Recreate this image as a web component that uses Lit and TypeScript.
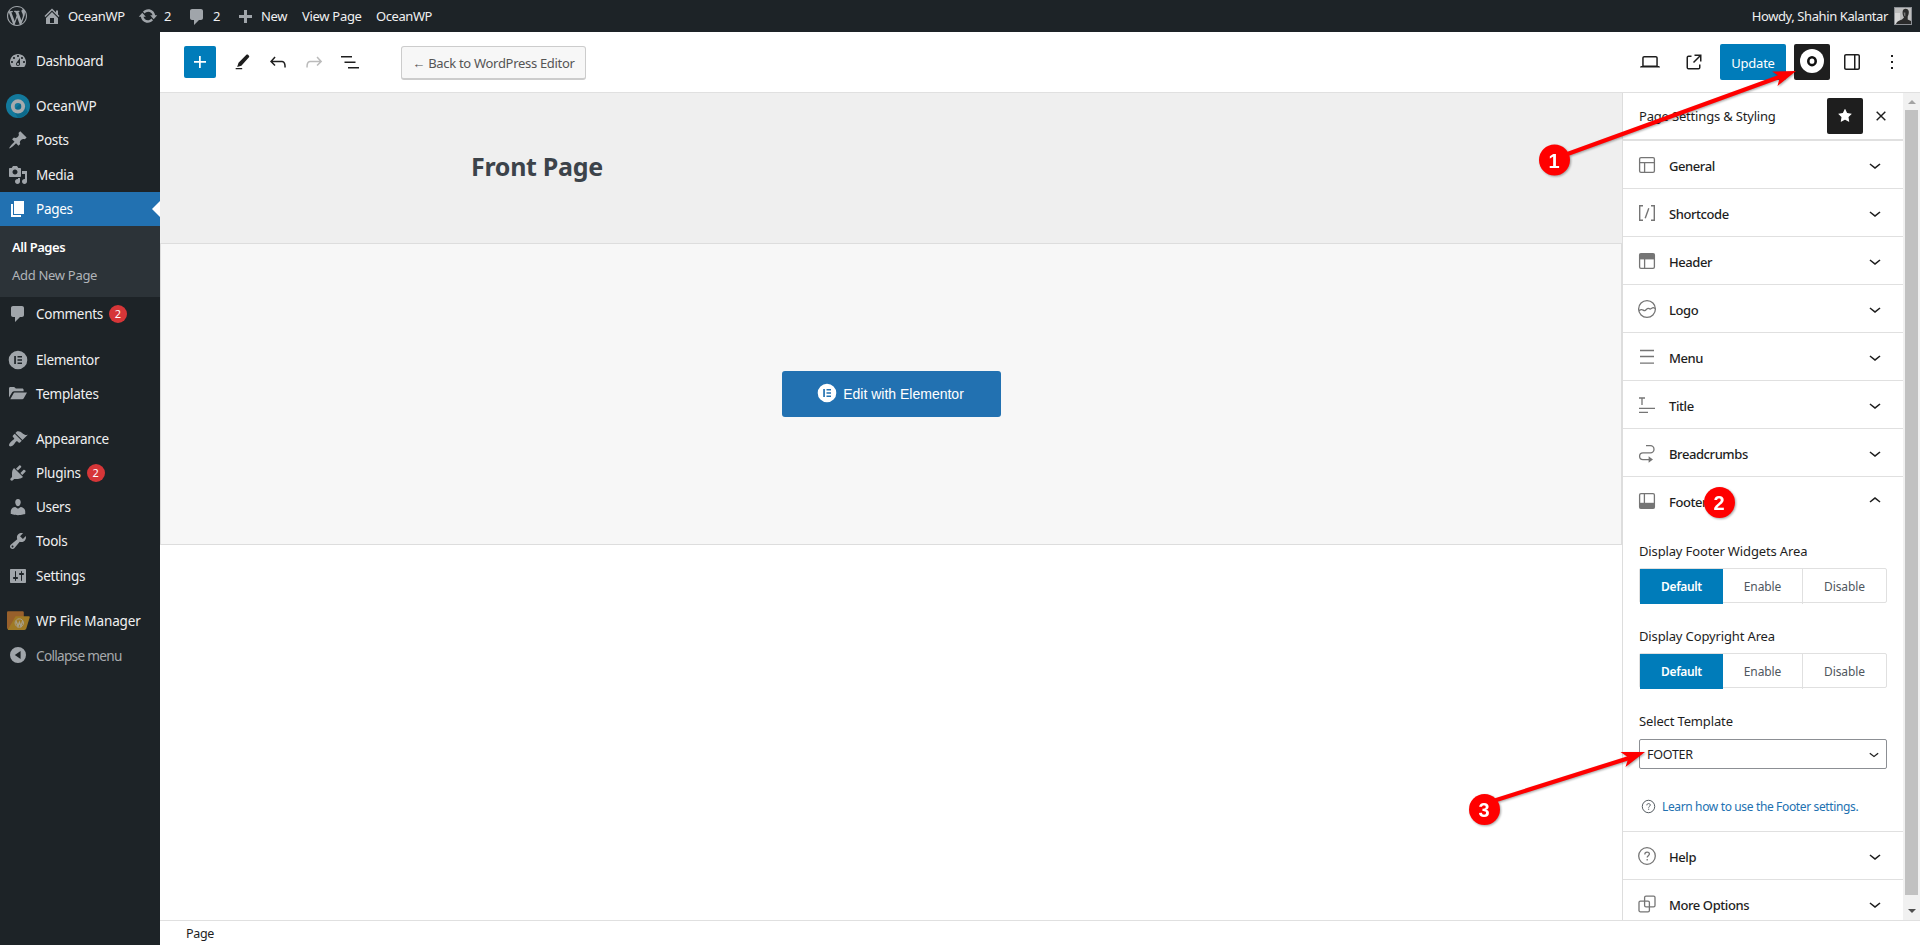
import { LitElement, html, svg, css, nothing } from "lit";
import { customElement, property } from "lit/decorators.js";
import { classMap } from "lit/directives/class-map.js";

const P: Record<string, { box: number; body: unknown }> = {};
const solid = (name: string, box: number, d: string) => {
  P[name] = { box, body: svg`<path fill="currentColor" d=${d}></path>` };
};

solid("wordpress", 20, "M20 10c0-5.51-4.49-10-10-10C4.48 0 0 4.49 0 10c0 5.52 4.48 10 10 10 5.51 0 10-4.48 10-10zM7.78 15.37L4.37 6.22c.55-.02 1.17-.08 1.17-.08.5-.06.44-1.13-.06-1.11 0 0-1.45.11-2.37.11-.18 0-.37 0-.58-.01C4.12 2.69 6.87 1.11 10 1.11c2.33 0 4.45.87 6.05 2.34-.68-.11-1.65.39-1.65 1.58 0 .74.45 1.36.9 2.1.35.61.55 1.36.55 2.46 0 1.49-1.4 5-1.4 5l-3.03-8.37c.54-.02.82-.17.82-.17.5-.05.44-1.25-.06-1.22 0 0-1.44.12-2.38.12-.87 0-2.33-.12-2.33-.12-.5-.03-.56 1.2-.06 1.22l.92.08 1.26 3.41zM17.41 10c.24-.64.74-1.87.43-4.25.7 1.29 1.05 2.71 1.05 4.25 0 3.29-1.73 6.24-4.4 7.78.97-2.59 1.94-5.2 2.92-7.78zM6.1 18.09C3.12 16.65 1.11 13.53 1.11 10c0-1.3.23-2.48.72-3.59C3.25 10.3 4.67 14.2 6.1 18.09zm4.03-6.63l2.58 6.98c-.86.29-1.76.45-2.71.45-.79 0-1.57-.11-2.29-.33.81-2.38 1.62-4.74 2.42-7.1z");
solid("home", 20, "M16 8.5l1.53 1.53-1.06 1.06L10 4.6l-6.47 6.49-1.06-1.06L10 2.5l4 4v-2h2v4zm-6-2.46l6 5.99V18H4v-5.97zM12 17v-5H8v5h4z");
solid("update", 20, "M10.2 3.28c3.53 0 6.43 2.61 6.92 6h2.08l-3.5 4-3.5-4h2.32c-.45-1.97-2.21-3.45-4.32-3.45-1.45 0-2.73.71-3.54 1.78L4.95 5.66C6.23 4.2 8.11 3.28 10.2 3.28zm-.4 13.44c-3.52 0-6.43-2.61-6.92-6H.8l3.5-4c1.17 1.33 2.33 2.67 3.5 4H5.48c.45 1.97 2.21 3.45 4.32 3.45 1.45 0 2.73-.71 3.54-1.78l1.71 1.95c-1.28 1.46-3.15 2.38-5.25 2.38z");
solid("comments", 20, "M5 2h9c1.1 0 2 .9 2 2v7c0 1.1-.9 2-2 2h-2l-5 5v-5H5c-1.1 0-2-.9-2-2V4c0-1.1.9-2 2-2z");
solid("new", 20, "M17 7v3h-5v5H9v-5H4V7h5V2h3v5h5z");
solid("dashboard", 20, "M3.76 16h12.48c1.1-1.37 1.76-3.11 1.76-5 0-4.42-3.58-8-8-8s-8 3.58-8 8c0 1.89.66 3.63 1.76 5zM10 4c.55 0 1 .45 1 1s-.45 1-1 1-1-.45-1-1 .45-1 1-1zM6 6c.55 0 1 .45 1 1s-.45 1-1 1-1-.45-1-1 .45-1 1-1zm8 0c.55 0 1 .45 1 1s-.45 1-1 1-1-.45-1-1 .45-1 1-1zm-5.37 5.55L12 7v6c0 1.1-.9 2-2 2s-2-.9-2-2c0-.57.24-1.08.63-1.45zM4 10c.55 0 1 .45 1 1s-.45 1-1 1-1-.45-1-1 .45-1 1-1zm12 0c.55 0 1 .45 1 1s-.45 1-1 1-1-.45-1-1 .45-1 1-1zm-5 3c0-.55-.45-1-1-1s-1 .45-1 1 .45 1 1 1 1-.45 1-1z");
solid("post", 20, "M10.44 3.02l1.82-1.82 6.36 6.35-1.83 1.82c-1.05-.68-2.48-.57-3.41.36l-.75.75c-.92.93-1.04 2.35-.35 3.41l-1.83 1.82-2.41-2.41-2.8 2.79c-.42.42-3.38 2.71-3.8 2.29s1.86-3.39 2.28-3.81l2.79-2.79L4.1 9.36l1.83-1.82c1.05.69 2.48.57 3.4-.36l.75-.75c.93-.92 1.05-2.35.36-3.41z");
solid("media", 20, "M13 11V4c0-.55-.45-1-1-1h-1.67L9 1H5L3.67 3H2c-.55 0-1 .45-1 1v7c0 .55.45 1 1 1h10c.55 0 1-.45 1-1zM7 4.5c1.38 0 2.5 1.12 2.5 2.5S8.38 9.5 7 9.5 4.5 8.38 4.5 7 5.62 4.5 7 4.5zM14 6h5v10.5c0 1.38-1.12 2.5-2.5 2.5S14 17.88 14 16.5s1.12-2.5 2.5-2.5c.17 0 .34.02.5.05V9h-3V6zm-4 8.05V13h2v3.5c0 1.38-1.12 2.5-2.5 2.5S7 17.88 7 16.5 8.12 14 9.5 14c.17 0 .34.02.5.05z");
solid("page", 20, "M6 15V2h10v13H6zm-1 1h8v2H3V5h2v11z");
solid("appearance", 20, "M14.48 11.06L7.41 3.99l1.5-1.5c.5-.56 2.3-.47 3.51.32 1.21.8 1.43 1.28 2.91 2.1 1.18.64 2.45 1.26 4.45.85zm-.71.71L6.7 4.7 4.93 6.47c-.39.39-.39 1.02 0 1.41l1.06 1.06c.39.39.39 1.03 0 1.42-.6.6-1.43 1.11-2.21 1.69-.35.26-.7.53-1.01.84C1.43 14.23.4 16.08 1.4 17.07c.99 1 2.84-.03 4.18-1.36.31-.31.58-.66.85-1.02.57-.78 1.08-1.61 1.69-2.21.39-.39 1.02-.39 1.41 0l1.06 1.06c.39.39 1.02.39 1.41 0z");
solid("plugins", 20, "M13.11 4.36L9.87 7.6 8 5.73l3.24-3.24c.35-.34 1.05-.2 1.56.32.52.51.66 1.21.31 1.55zm-8 1.77l.91-1.12 9.01 9.01-1.19.84c-.71.71-2.63 1.16-3.82 1.16H6.14L4.9 17.26c-.59.59-1.54.59-2.12 0-.59-.58-.59-1.53 0-2.12l1.24-1.24v-3.88c0-1.13.4-3.19 1.09-3.89zm7.26 3.97l3.24-3.24c.34-.35 1.04-.21 1.55.31.52.51.66 1.21.31 1.55l-3.24 3.25z");
solid("users", 20, "M10 9.25c-2.27 0-2.73-3.44-2.73-3.44C7 4.02 7.82 2 9.97 2c2.16 0 2.98 2.02 2.71 3.81 0 0-.41 3.44-2.68 3.44zm0 2.57L12.72 10c2.39 0 4.52 2.33 4.52 4.53v2.49s-3.65 1.13-7.24 1.13c-3.65 0-7.24-1.13-7.24-1.13v-2.49c0-2.25 1.94-4.48 4.47-4.48z");
solid("tools", 20, "M16.68 9.77c-1.34 1.34-3.3 1.67-4.95.99l-5.41 6.52c-.99.99-2.59.99-3.58 0s-.99-2.59 0-3.57l6.52-5.42c-.68-1.65-.35-3.61.99-4.95 1.28-1.28 3.12-1.62 4.72-1.06l-2.89 2.89 2.82 2.82 2.86-2.87c.53 1.58.18 3.39-1.08 4.65zM3.81 16.21c.4.39 1.04.39 1.43 0 .4-.4.4-1.04 0-1.43-.39-.4-1.03-.4-1.43 0-.39.39-.39 1.03 0 1.43z");
solid("settings", 20, "M18 16V4c0-.55-.45-1-1-1H3c-.55 0-1 .45-1 1v12c0 .55.45 1 1 1h14c.55 0 1-.45 1-1zM8 11h1c.55 0 1 .45 1 1s-.45 1-1 1H8v1.5c0 .28-.22.5-.5.5s-.5-.22-.5-.5V13H6c-.55 0-1-.45-1-1s.45-1 1-1h1V5.5c0-.28.22-.5.5-.5s.5.22.5.5V11zm5-2h-1c-.55 0-1-.45-1-1s.45-1 1-1h1V5.5c0-.28.22-.5.5-.5s.5.22.5.5V7h1c.55 0 1 .45 1 1s-.45 1-1 1h-1v5.5c0 .28-.22.5-.5.5s-.5-.22-.5-.5V9z");
solid("collapse", 20, "M10 2a8 8 0 1 0 0 16 8 8 0 0 0 0-16zM12.6 6v8L6.8 10z");
solid("folder", 20, "M1 15.2V4.4C1 3.6 1.6 3 2.4 3h3.4c.6 0 .9.2 1.3.7l.7.9h6.4c.8 0 1.4.6 1.4 1.4v1.2H6.2c-.9 0-1.5.4-2 1.1L1 13.6zM6.6 8.6H19l-3.4 5.9c-.3.5-.8.8-1.4.8H2.3l3.3-6c.2-.5.5-.7 1-.7z");
P.elementor = { box: 20, body: svg`<path fill="currentColor" fill-rule="evenodd" d="M10 .7a9.3 9.3 0 1 0 0 18.6A9.3 9.3 0 0 0 10 .7zM6.2 6h1.7v8H6.2zM9.5 6h4.5v1.6H9.5zM9.5 9.2h4.5v1.6H9.5zM9.5 12.4h4.5V14H9.5z"></path>` };
P.ocean = { box: 24, body: svg`<circle cx="12" cy="12" r="12" fill="#13799c"></circle><path fill="#0c698a" d="M16.5 7.2 21.6 18A12 12 0 0 1 12 24L7.5 16.5z"></path><circle cx="12" cy="12.4" r="5.2" fill="none" stroke="#a7aaad" stroke-width="3.8"></circle>` };
P.files = { box: 24, body: svg`<path fill="#98602b" d="M1 3.2Q1 2.2 2 2.2h14.6q1.2 0 1.2 1.2V9L6 20H2q-1 0-1-1z"></path><path fill="#9f7a25" d="M9.6 7.3h13.2q1.3 0 .9 1.3l-3.4 11q-.4 1.4-1.8 1.4H1.6z"></path><g fill="none" stroke="#a7a08a" stroke-width="1"><circle cx="13.3" cy="14" r="4.2"></circle><path d="m10.2 12.2 1.8 5 1.4-4 1.5 4 1.7-5.2" stroke-width="1.3"></path></g>` };

solid("plus", 24, "M11 12.75v5.25h1.75v-5.25H18V11h-5.25V6H11v5H6v1.75z");
solid("edit", 24, "M19.6 6.9c.5-.6.5-1.3 0-1.8l-1-.9c-.5-.5-1.3-.5-1.8 0l-8.6 8.6-1.5 4.6 4.6-1.4zM12.2 18.5H5.1V20h7.1z");
solid("undo", 24, "M18.3 11.7c-.6-.6-1.4-.9-2.3-.9H6.7l2.9-3.3-1.1-1-4.5 5L8.5 16l1-1-2.7-2.7H16c.5 0 .9.2 1.3.5 1 1 1 3.4 1 4.5v.3h1.5v-.2c0-1.5 0-4.3-1.5-5.7z");
solid("redo", 24, "M15.6 6.5l-1.1 1 2.9 3.3H8c-.9 0-1.7.3-2.3.9-1.4 1.5-1.4 4.2-1.4 5.6v.2h1.5v-.3c0-1.1 0-3.5 1-4.5.3-.3.7-.5 1.3-.5h9.2L14.5 15l1.1 1.1 4.6-4.6-4.6-5z");
solid("list", 24, "M3 6h11v1.5H3V6Zm3.5 5.5h11V13h-11v-1.5ZM21 17H10v1.5h11V17Z");
solid("laptop", 24, "M20.5 16h-.7V8c0-1.1-.9-2-2-2H6.2c-1.1 0-2 .9-2 2v8h-.7c-.8 0-1.5.7-1.5 1.5h20c0-.8-.7-1.5-1.5-1.5zM5.7 8c0-.3.2-.5.5-.5h11.6c.3 0 .5.2.5.5v7.6H5.7V8z");
solid("external", 24, "M19.5 4.5h-7V6h4.44l-5.97 5.97 1.06 1.06L18 7.06v4.44h1.5v-7Zm-13 1a2 2 0 0 0-2 2v10a2 2 0 0 0 2 2h10a2 2 0 0 0 2-2v-3H17v3a.5.5 0 0 1-.5.5h-10a.5.5 0 0 1-.5-.5v-10a.5.5 0 0 1 .5-.5h3V5.5h-3Z");
solid("drawer", 24, "M18 4H6c-1.1 0-2 .9-2 2v12c0 1.1.9 2 2 2h12c1.1 0 2-.9 2-2V6c0-1.1-.9-2-2-2zm-4 14.5H6c-.3 0-.5-.2-.5-.5V6c0-.3.2-.5.5-.5h8v13zm4.5-.5c0 .3-.2.5-.5.5h-2.5v-13H18c.3 0 .5.2.5.5v12z");
solid("more", 24, "M13 19h-2v-2h2v2zm0-6h-2v-2h2v2zm0-6h-2V5h2v2z");
solid("down", 24, "M17.5 11.6L12 16l-5.5-4.4.9-1.2L12 14l4.5-3.6 1 1.2z");
solid("up", 24, "M6.5 12.4L12 8l5.5 4.4-.9 1.2L12 10l-4.5 3.6-1-1.2z");
solid("star", 24, "M11.776 4.454a.25.25 0 01.448 0l2.069 4.192a.25.25 0 00.188.137l4.626.672a.25.25 0 01.139.426l-3.348 3.263a.25.25 0 00-.072.222l.79 4.607a.25.25 0 01-.362.263l-4.138-2.175a.25.25 0 00-.232 0l-4.138 2.175a.25.25 0 01-.363-.263l.79-4.607a.25.25 0 00-.071-.222L4.754 9.881a.25.25 0 01.139-.426l4.626-.672a.25.25 0 00.188-.137l2.069-4.192z");
const line = (name: string, body: unknown) => {
  P[name] = { box: 20, body: svg`<g fill="none" stroke="currentColor" stroke-width="1.3">${body}</g>` };
};
line("close", svg`<path d="m5.2 5.2 9.6 9.6M14.8 5.2l-9.6 9.6" stroke-width="1.6"></path>`);
line("s-general", svg`<rect x="2.6" y="2.6" width="14.8" height="14.8" rx="1.4"></rect><path d="M2.6 7.6h14.8M7.6 7.6v9.8"></path>`);
line("s-shortcode", svg`<path d="M6 2.7H2.7v14.6H6M14 2.7h3.3v14.6H14M11.8 5.2 8.2 15.2" stroke-width="1.4"></path>`);
line("s-header", svg`<rect x="2.6" y="2.6" width="14.8" height="14.8" rx="1.4"></rect><path d="M2.6 2.8h14.8v5.6H2.6z" fill="currentColor" stroke="none"></path><path d="M7.6 8v9.4"></path>`);
line("s-logo", svg`<circle cx="10" cy="10" r="8.4"></circle><path d="M2 11.6c1.2-.8 2-1.200 2.900-1 1.200.2 1.700 1.200 2.800 1 1.200-.3 2.200-2.300 3.400-2.300 1 0 1.300.8 2.200.7 1.200-.1 1.800-1.300 2.800-1.300.7 0 1.200.3 1.900.8"></path>`);
line("s-menu", svg`<path d="M3 3.500h14M3 9.500h14M3 16.200h14"></path>`);
line("s-title", svg`<path d="M2 3h6M5 3v7M2 13.300h16M2 17.300h9"></path>`);
line("s-breadcrumbs", svg`<path d="M9 2.600h4.400a3.500 3.500 0 0 1 0 7.200H6a3.400 3.400 0 0 0 0 6.800h6.500"></path><path d="m11.600 13.300 4.400 3.300-4.400 3.200z" fill="currentColor" stroke="none"></path>`);
line("s-footer", svg`<rect x="2.6" y="2.6" width="14.8" height="14.8" rx="1.400"></rect><path d="M2.600 11.800h14.800v5.500H2.600z" fill="currentColor" stroke="none"></path><path d="M7.400 2.600V12"></path>`);
line("s-help", svg`<circle cx="10" cy="10" r="8.300"></circle><path d="M7.800 8.400c0-1.400 1-2.300 2.300-2.300s2.300.8 2.300 2c0 1.600-2.200 1.700-2.200 3.400M10.200 12.900v1.500"></path>`);
line("s-options", svg`<rect x="2" y="7.200" width="10.400" height="10.600" rx="1.400"></rect><rect x="7.600" y="2.200" width="10.400" height="10.600" rx="1.400"></rect>`);

@customElement("ui-icon")
class UiIcon extends LitElement {
  @property() name = "";
  @property({ type: Number }) size = 20;
  static styles = css`
    :host { display: block; flex: none; line-height: 0; }
    svg { display: block; overflow: visible; }
  `;
  render() {
    const p = P[this.name];
    return html`<svg width=${this.size} height=${this.size} viewBox="0 0 ${p.box} ${p.box}">${p.body}</svg>`;
  }
}

interface MenuEntry { icon: string; label: string; badge?: number; kind?: string; sub?: string[]; }
const MENU: MenuEntry[][] = [
  [{ icon: "dashboard", label: "Dashboard" }],
  [
    { icon: "ocean", label: "OceanWP", kind: "big" },
    { icon: "post", label: "Posts" },
    { icon: "media", label: "Media", kind: "tall" },
    { icon: "page", label: "Pages", kind: "current", sub: ["All Pages", "Add New Page"] },
    { icon: "comments", label: "Comments", badge: 2 },
  ],
  [{ icon: "elementor", label: "Elementor" }, { icon: "folder", label: "Templates" }],
  [
    { icon: "appearance", label: "Appearance" },
    { icon: "plugins", label: "Plugins", badge: 2 },
    { icon: "users", label: "Users" },
    { icon: "tools", label: "Tools" },
    { icon: "settings", label: "Settings", kind: "tall" },
  ],
  [{ icon: "files", label: "WP File Manager", kind: "big" }, { icon: "collapse", label: "Collapse menu", kind: "muted" }],
];

@customElement("admin-menu")
class AdminMenu extends LitElement {
  static styles = css`
    :host { display: flex; flex-direction: column; gap: 11px; width: 160px; box-sizing: border-box; padding-top: 12px; background: #1d2327; color: #f0f0f1; font-size: 13.5px; letter-spacing: -0.28px; }
    .item { display: flex; align-items: center; height: 34px; padding-left: 8px; gap: 8px; position: relative; white-space: nowrap; }
    .item ui-icon { color: #a0a5aa; }
    .tall { height: 35px; }
    .big { padding-left: 6px; gap: 6px; letter-spacing: -0.12px; }
    .current { background: #2271b1; color: #fff; }
    .current ui-icon { color: #fff; }
    .current::after { content: ""; position: absolute; right: 0; top: 9px; border: 8px solid transparent; border-right-color: #fff; border-left: 0; }
    .muted { color: #a7aaad; letter-spacing: -0.7px; font-size: 13.6px; }
    .badge { width: 18px; height: 18px; border-radius: 9px; background: #d63638; color: #fff; font-size: 11px; line-height: 18px; text-align: center; margin-left: -2px; letter-spacing: 0; }
    .sub { background: #2c3338; height: 71px; box-sizing: border-box; padding: 7px 12px; font-size: 13px; line-height: 28px; color: #b0b4b8; letter-spacing: -0.3px; }
    .sub + .item { padding-bottom: 1px; }
    .on { font-weight: 600; color: #fff; letter-spacing: -0.45px; }
  `;
  render() {
    return MENU.map((group) => html`<nav>${group.map((m) => html`
      <div class=${classMap({ item: true, [m.kind ?? "plain"]: true })}>
        <ui-icon name=${m.icon} size=${m.kind === "big" ? 24 : 20}></ui-icon>
        <span>${m.label}</span>
        ${m.badge ? html`<span class="badge">${m.badge}</span>` : nothing}
      </div>
      ${m.sub ? html`<div class="sub">${m.sub.map((s, i) => html`<div class=${classMap({ on: i === 0 })}>${s}</div>`)}</div>` : nothing}
    `)}</nav>`);
  }
}

@customElement("settings-panel")
class SettingsPanel extends LitElement {
  static styles = css`
    :host { display: flex; box-sizing: border-box; border-left: 1px solid #ddd; background: #fff; color: #1e1e1e; font-size: 13px; letter-spacing: -0.14px; overflow: hidden; }
    .body { width: 280px; flex: none; }
    .head { display: flex; align-items: center; height: 46px; border-bottom: 2px solid #e0e0e0; padding: 0 4px 0 16px; box-sizing: content-box; letter-spacing: -0.18px; }
    .head span { flex: 1; }
    .star { width: 36px; height: 36px; border-radius: 2px; background: #1e1e1e; color: #fff; display: grid; place-items: center; }
    .close { width: 36px; display: grid; place-items: center; }
    .row { display: flex; align-items: center; height: 47px; padding: 0 16px 0 14px; gap: 12px; border-bottom: 1px solid #e0e0e0; letter-spacing: -0.42px; }
    .row ui-icon:first-child { color: #757575; }
    .row span { flex: 1; font-weight: 500; padding-top: 2px; }
    .open { border-bottom: 0; height: 48px; }
    .fields { height: 307px; border-bottom: 1px solid #e0e0e0; padding: 16px 16px 0; box-sizing: border-box; }
    .label { line-height: 20px; height: 27px; }
    .toggle { display: grid; grid-template-columns: 83px 79px 1fr; height: 35px; box-sizing: border-box; border: 1px solid #e0e0e0; border-radius: 2px; margin-bottom: 23px; font-size: 12px; line-height: 35px; text-align: center; color: #50575e; letter-spacing: -0.1px; }
    .toggle .on { background: #007cba; color: #fff; font-weight: 600; letter-spacing: -0.35px; }
    .toggle .last { border-left: 1px solid #e0e0e0; }
    .select { display: flex; align-items: center; justify-content: space-between; height: 30px; box-sizing: border-box; border: 1px solid #8c8f94; border-radius: 2px; padding: 0 2px 0 7px; font-size: 12.5px; letter-spacing: -0.25px; margin-top: 1px; }
    .learn { display: flex; align-items: center; gap: 6px; padding: 29px 0 0 2px; font-size: 12px; letter-spacing: -0.36px; color: #2271b1; white-space: nowrap; }
    .learn ui-icon { color: #50575e; }
    .bar { flex: 1; background: #f1f1f1; display: flex; flex-direction: column; align-items: center; justify-content: space-between; }
    .arrow { border: 4px solid transparent; border-top: 0; border-bottom: 4px solid #a3a3a3; margin: 7px 0 6px; }
    .dn { border-top: 4px solid #505050; border-bottom: 0; margin: 14px 0 7px; }
    .thumb { width: 13px; flex: 1; background: #c1c1c1; }
  `;
  private row(icon: string, label: string, open = false) {
    return html`<div class=${classMap({ row: true, open })}>
      <ui-icon name=${icon} size="20"></ui-icon><span>${label}</span><ui-icon name=${open ? "up" : "down"} size="24"></ui-icon>
    </div>`;
  }
  private toggle(label: string) {
    return html`<div class="label">${label}</div>
      <div class="toggle"><div class="on">Default</div><div>Enable</div><div class="last">Disable</div></div>`;
  }
  render() {
    return html`
      <div class="body">
        <div class="head"><span>Page Settings &amp; Styling</span><div class="star"><ui-icon name="star" size="22"></ui-icon></div><div class="close"><ui-icon name="close" size="18"></ui-icon></div></div>
        ${["General", "Shortcode", "Header", "Logo", "Menu", "Title", "Breadcrumbs"].map((n) => this.row("s-" + n.toLowerCase(), n))}
        ${this.row("s-footer", "Footer", true)}
        <div class="fields">
          ${this.toggle("Display Footer Widgets Area")}
          ${this.toggle("Display Copyright Area")}
          <div class="label">Select Template</div>
          <div class="select"><span>FOOTER</span><ui-icon name="down" size="20"></ui-icon></div>
          <div class="learn"><ui-icon name="s-help" size="15"></ui-icon>Learn how to use the Footer settings.</div>
        </div>
        ${this.row("s-help", "Help")} ${this.row("s-options", "More Options")}
      </div>
      <div class="bar"><div class="arrow"></div><div class="thumb"></div><div class="arrow dn"></div></div>
    `;
  }
}

@customElement("app-root")
class AppRoot extends LitElement {
  static styles = css`
    :host { display: grid; grid-template: 32px 1fr / 160px 1fr; width: 1920px; height: 945px; position: relative; overflow: hidden; background: #fff; font-family: "Noto Sans", "Open Sans", sans-serif; font-size: 13px; color: #1e1e1e; }
    .adminbar { grid-column: 1 / 3; display: flex; align-items: center; background: #1d2327; color: #f0f0f1; padding: 0 8px 0 7px; letter-spacing: -0.3px; white-space: nowrap; }
    .adminbar ui-icon { color: #a0a5aa; }
    .site { margin-left: 15px; width: 96px; }
    .upd { width: 49px; }
    .com { width: 48px; }
    .add { width: 67px; }
    .com ui-icon { margin-top: 1px; }
    .add ui-icon { margin-top: 3px; }
    .adminbar .grp { display: flex; align-items: center; gap: 6px; }
    .view { width: 74px; }
    .second { letter-spacing: -0.42px; }
    .howdy { margin-left: auto; margin-right: 6px; letter-spacing: -0.4px; }
    .avatar { display: block; flex: none; }
    .editor { display: grid; grid-template: 61px 1fr 25px / 1fr 298px; min-width: 0; }
    .toolbar { grid-column: 1 / 3; display: flex; align-items: center; border-bottom: 1px solid #e0e0e0; padding: 0 16px 0 24px; }
    .plus { width: 32px; height: 32px; background: #007cba; color: #fff; border-radius: 2px; display: grid; place-items: center; margin-right: 8px; }
    .tool { width: 36px; display: grid; place-items: center; }
    .off { color: #bbb; }
    .back { margin: 2px 0 0 33px; width: 185px; height: 34px; box-sizing: border-box; border: 1px solid #ccc; border-bottom-width: 2px; border-radius: 3px; background: #f7f7f7; color: #555; text-align: center; line-height: 33px; letter-spacing: -0.3px; white-space: nowrap; }
    .right { margin-left: auto; display: flex; align-items: center; }
    .right .tool { width: 44px; }
    .update { width: 66px; height: 36px; margin: 0 8px 0 4px; border-radius: 2px; background: #007cba; color: #fff; line-height: 38px; text-align: center; letter-spacing: -0.25px; }
    .owp { width: 36px; height: 36px; border-radius: 2px; background: #1e1e1e; display: grid; place-items: center; }
    .owp svg { overflow: visible; }
    .right .last { width: 36px; margin-right: -6px; }
    .canvas { display: flex; flex-direction: column; }
    .hero { height: 150px; background: #efefef; box-sizing: border-box; padding: 53px 0 0 311px; font-size: 25px; line-height: 40px; font-weight: 700; color: #3c434a; letter-spacing: -0.3px; }
    .block { height: 302px; box-sizing: border-box; border: 1px solid #ddd; background: #f7f7f7; display: grid; place-items: center; }
    .cta { display: flex; align-items: center; justify-content: center; gap: 6px; width: 219px; height: 46px; border-radius: 3px; background: #2271b1; color: #fff; font: 14px "Liberation Sans", Arial, sans-serif; }
    .cta ui-icon { margin: 0 0 3px -1px; }
    .foot { grid-column: 1 / 3; border-top: 1px solid #e0e0e0; padding: 4px 26px; font-size: 12.5px; line-height: 18px; background: #fff; letter-spacing: -0.3px; }
    settings-panel { height: 827px; }
    .notes { position: absolute; left: 0; top: 0; pointer-events: none; filter: drop-shadow(1px 1px 1px rgba(0, 0, 0, 0.35)); }
    .num { font: bold 20px "Liberation Sans", Arial, sans-serif; fill: #fff; text-anchor: middle; }
  `;
  render() {
    return html`
      <header class="adminbar">
        <ui-icon name="wordpress" size="20"></ui-icon>
        <div class="grp site"><ui-icon name="home"></ui-icon>OceanWP</div>
        <div class="grp upd"><ui-icon name="update"></ui-icon>2</div>
        <div class="grp com"><ui-icon name="comments"></ui-icon>2</div>
        <div class="grp add"><ui-icon name="new"></ui-icon>New</div>
        <div class="view">View Page</div>
        <div class="second">OceanWP</div>
        <div class="howdy">Howdy, Shahin Kalantar</div>
        <svg class="avatar" width="18" height="18" viewBox="0 0 18 18">
          <rect x=".5" y=".5" width="17" height="17" fill="#bdbdbd" stroke="#8c8f94"></rect>
          <path d="M1 6h5v11H1z" fill="#d6d6d6"></path>
          <path d="M2 17c.5-2 2-3.500 6-4.600l2-2C8.500 8.500 8 4 9.500 2.500c2-1.500 4.500-.5 5.200 1.500.4 2-.2 4-1 5.500v3L17 14v3z" fill="#2b2b2b"></path>
          <path d="M9.600 5.500h1.800v4l-1.200-.8z" fill="#777"></path>
        </svg>
      </header>
      <admin-menu></admin-menu>
      <main class="editor">
        <div class="toolbar">
          <div class="plus"><ui-icon name="plus" size="24"></ui-icon></div>
          <div class="tool"><ui-icon name="edit" size="22"></ui-icon></div>
          <div class="tool"><ui-icon name="undo" size="24"></ui-icon></div>
          <div class="tool off"><ui-icon name="redo" size="24"></ui-icon></div>
          <div class="tool"><ui-icon name="list" size="24"></ui-icon></div>
          <div class="back">← Back to WordPress Editor</div>
          <div class="right">
            <div class="tool"><ui-icon name="laptop" size="24"></ui-icon></div>
            <div class="tool"><ui-icon name="external" size="24"></ui-icon></div>
            <div class="update">Update</div>
            <div class="owp"><svg width="24" height="24" viewBox="0 0 24 24"><circle cx="12" cy="11" r="12" fill="#fff"></circle><ellipse cx="12" cy="11.2" rx="3.7" ry="3.900" fill="none" stroke="#111" stroke-width="2.600"></ellipse></svg></div>
            <div class="tool"><ui-icon name="drawer" size="24"></ui-icon></div>
            <div class="tool last"><ui-icon name="more" size="24"></ui-icon></div>
          </div>
        </div>
        <section class="canvas">
          <div class="hero">Front Page</div>
          <div class="block"><div class="cta"><ui-icon name="elementor" size="20"></ui-icon>Edit with Elementor</div></div>
        </section>
        <settings-panel></settings-panel>
        <div class="foot">Page</div>
      </main>
      <svg class="notes" width="1920" height="945" viewBox="0 0 1920 945">
        <g fill="#f00">
          <path d="M1562 156 1782 76" stroke="#f00" stroke-width="4.200"></path>
          <path d="M1796 71 1772 71.500 1780 76.500 1777.500 86z"></path>
          <path d="M1490 802 1629 758" stroke="#f00" stroke-width="4.200"></path>
          <path d="M1645 752 1620.500 752 1628.500 757.500 1625.500 767z"></path>
          <circle cx="1554.500" cy="160" r="15.500"></circle>
          <circle cx="1719.500" cy="502.500" r="15.500"></circle>
          <circle cx="1484.500" cy="809.500" r="15.500"></circle>
        </g>
        <text class="num" x="1554" y="167.500">1</text>
        <text class="num" x="1719" y="510">2</text>
        <text class="num" x="1484" y="817">3</text>
      </svg>
    `;
  }
}
